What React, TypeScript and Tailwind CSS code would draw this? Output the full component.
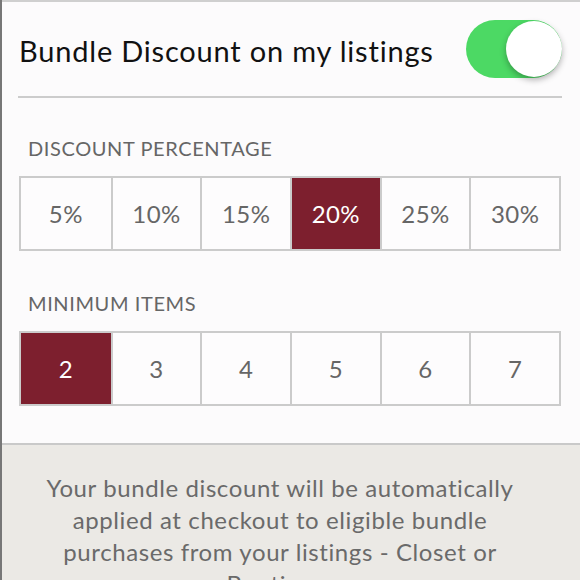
import React, { useState } from 'react';

const percents = ['5%', '10%', '15%', '20%', '25%', '30%'];
const minItems = ['2', '3', '4', '5', '6', '7'];

const Segmented: React.FC<{ options: string[]; value: string; onChange: (v: string) => void }> = ({ options, value, onChange }) => (
  <div className="grid grid-cols-6 h-[75px] border-2 border-[#cbcbcb] bg-white">
    {options.map((opt, i) => (
      <button
        key={opt}
        onClick={() => onChange(opt)}
        className={`flex items-center justify-center text-[24px] tracking-[0.4px] ${i > 0 ? 'border-l-2 border-[#cbcbcb]' : ''} ${
          opt === value ? 'bg-[#7d1f2e] text-white' : 'bg-[#fdfcfd] text-[#666666]'
        }`}
      >
        {opt}
      </button>
    ))}
  </div>
);

export default function App() {
  const [enabled, setEnabled] = useState(true);
  const [percent, setPercent] = useState('20%');
  const [items, setItems] = useState('2');

  return (
    <div className="w-[580px] h-[580px] overflow-hidden border-l-2 border-[#777777] bg-[#fcfbfc] font-['Lato',sans-serif] flex flex-col">
      <div className="border-t-2 border-[#cfcfcf]">
        {/* Header row */}
        <div className="h-[94px] flex items-center justify-between pl-[17px] pr-[18px]">
          <h1 className="text-[29px] tracking-[0.8px] text-[#111111] mt-[3px]">Bundle Discount on my listings</h1>
          <button
            onClick={() => setEnabled(!enabled)}
            className={`relative w-[96px] h-[58px] rounded-full ${enabled ? 'bg-[#4cd964]' : 'bg-[#e5e5e5]'}`}
          >
            <span
              className={`absolute top-[1px] w-[56px] h-[56px] rounded-full bg-white shadow-[0_3px_6px_rgba(0,0,0,0.3)] ${
                enabled ? 'right-[0px]' : 'left-[1px]'
              }`}
            />
          </button>
        </div>
        <div className="ml-[16px] mr-[18px] h-[2px] bg-[#cccccc]" />

        {/* Discount percentage */}
        <div className="pl-[17px] pr-[19px]">
          <div className="pl-[9px] mt-[35px] h-[28px] text-[20px] text-[#666666] tracking-[0.6px]">DISCOUNT PERCENTAGE</div>
          <div className="mt-[15px]">
            <Segmented options={percents} value={percent} onChange={setPercent} />
          </div>

          <div className="pl-[9px] mt-[37px] h-[28px] text-[20px] text-[#666666] tracking-[0.6px]">MINIMUM ITEMS</div>
          <div className="mt-[15px]">
            <Segmented options={minItems} value={items} onChange={setItems} />
          </div>
        </div>
      </div>

      {/* Info footer */}
      <div className="mt-[37px] flex-1 border-t-2 border-[#c9c9c9] bg-[#ebe9e5]">
        <p className="w-[480px] ml-[38px] mt-[27px] text-center text-[24px] tracking-[0.6px] leading-[32px] text-[#6a6a6a]">
          Your bundle discount will be automatically applied at checkout to eligible bundle purchases from your listings - Closet or Boutique.
        </p>
      </div>
    </div>
  );
}
